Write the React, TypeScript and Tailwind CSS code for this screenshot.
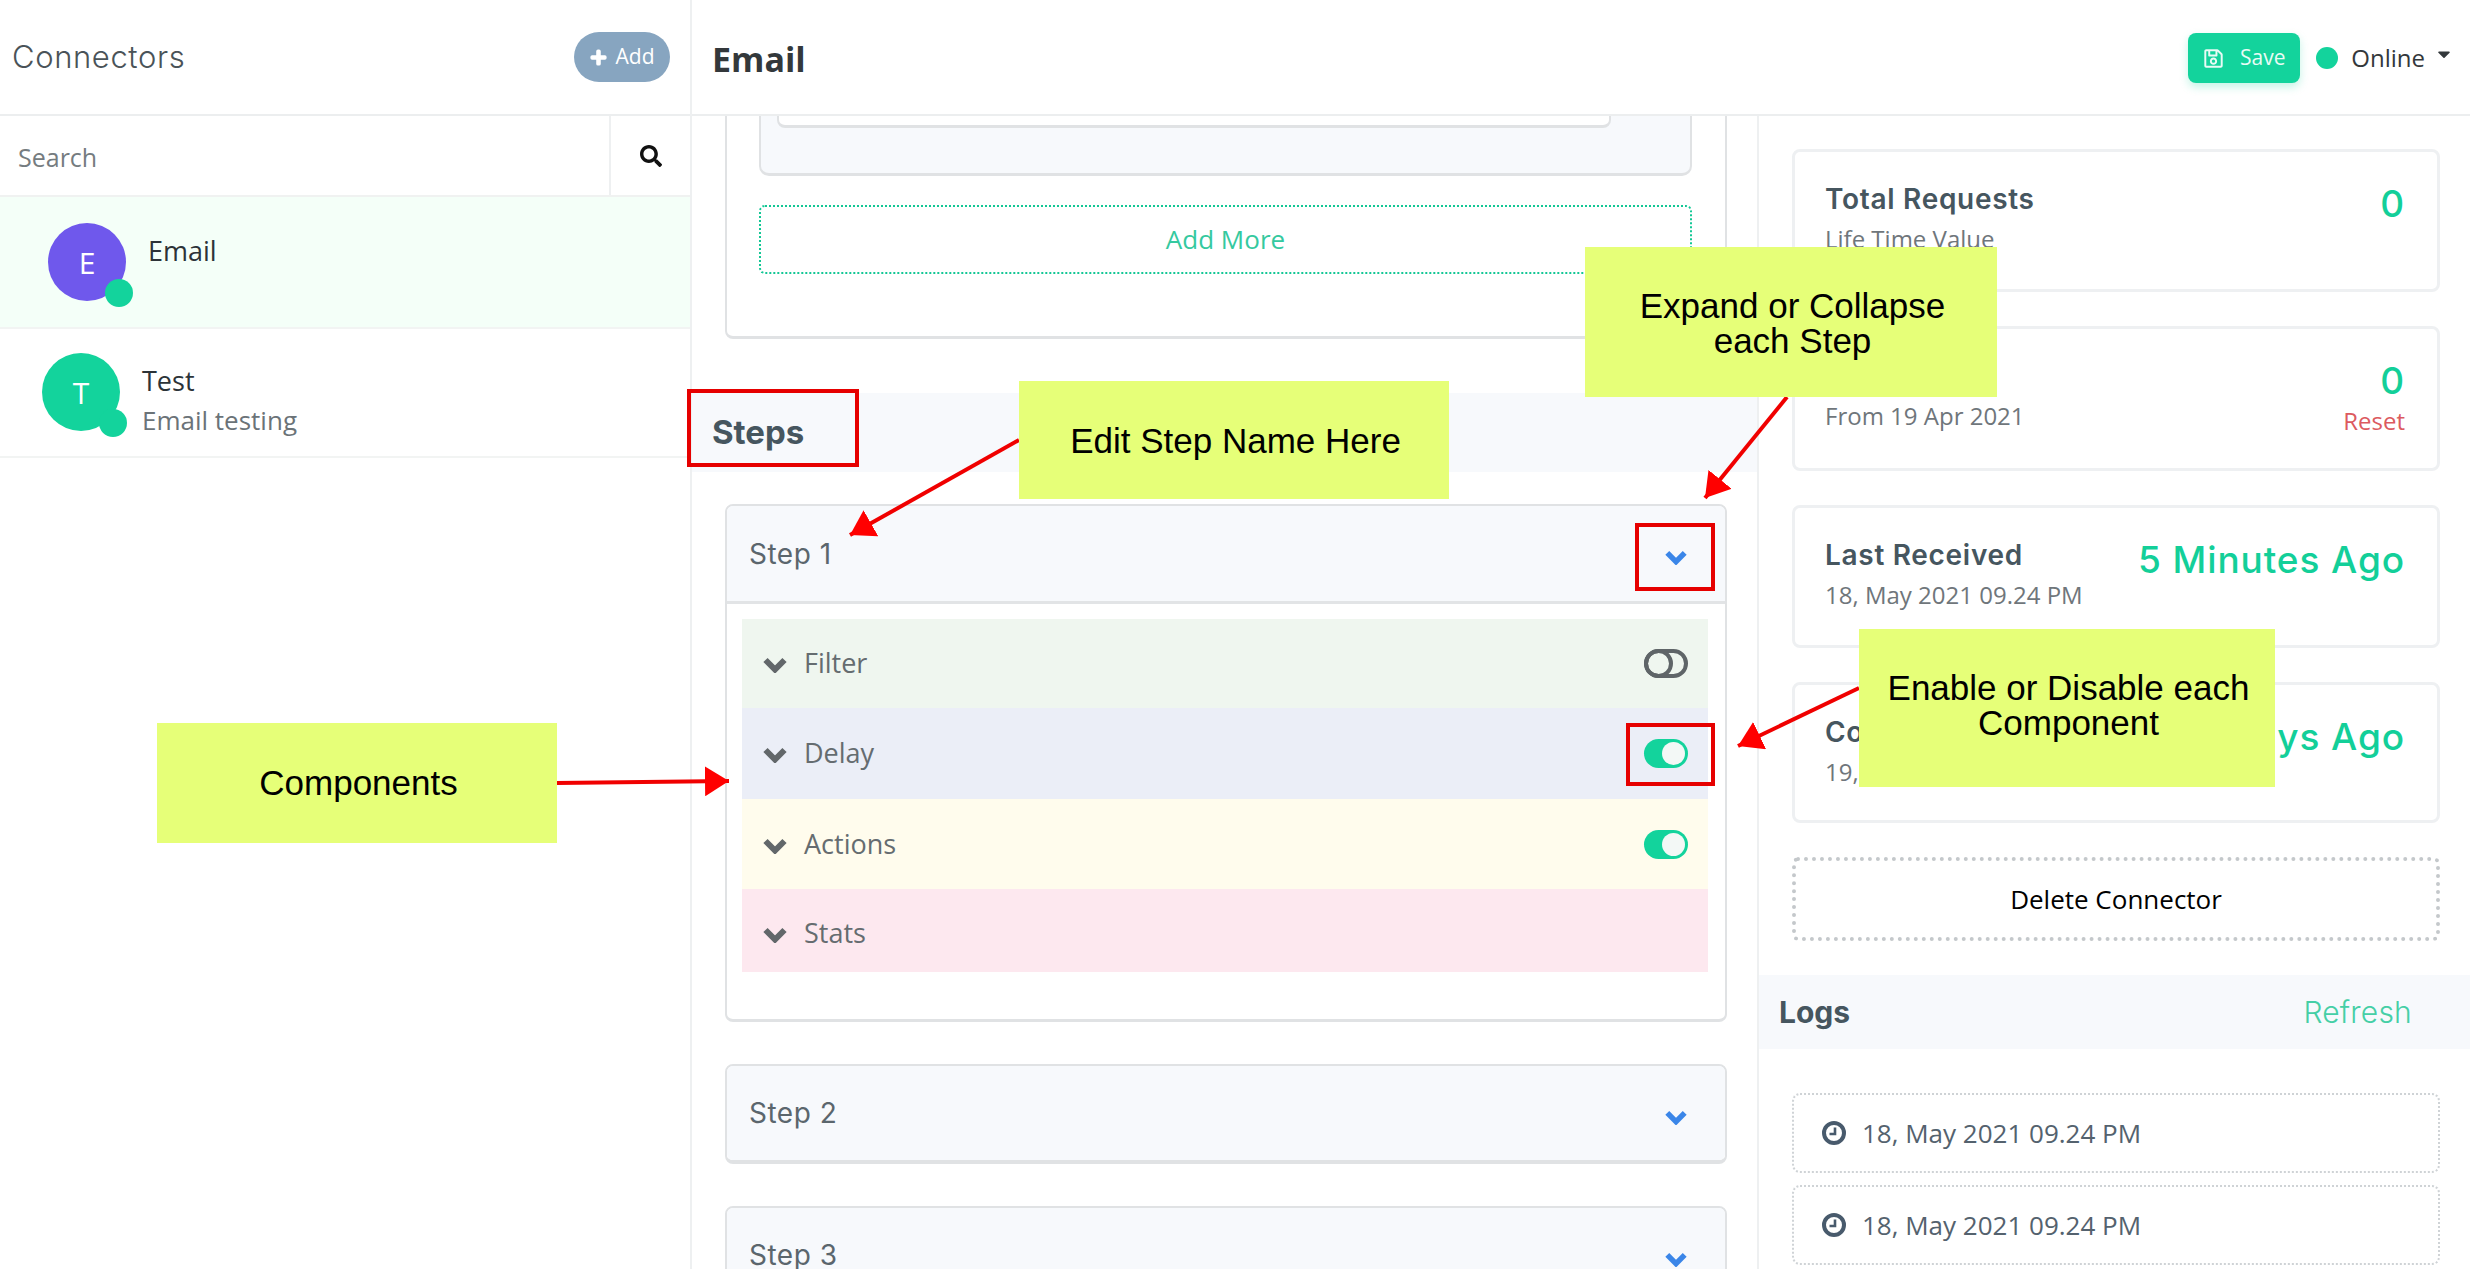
import React from 'react';
import { FaPlus, FaSearch, FaRegSave, FaCaretDown } from 'react-icons/fa';

const Chevron = ({ className }: { className: string }) => (
  <svg className={className} viewBox="0 0 24 16" fill="none" stroke="currentColor" strokeWidth="6">
    <polyline points="2.5,3 12,12.5 21.5,3" />
  </svg>
);

const Clock = () => (
  <svg className="h-[24px] w-[24px] shrink-0 text-[#485a6c]" viewBox="0 0 24 24" fill="none" stroke="currentColor">
    <circle cx="12" cy="12" r="10" strokeWidth="4" />
    <polyline points="13,6.5 13,13 7.5,13" strokeWidth="2.6" />
  </svg>
);

const Toggle = ({ on }: { on: boolean }) =>
  on ? (
    <div className="flex h-[29px] w-[44px] items-center justify-end rounded-full bg-[#13d39c] pr-[3px]">
      <div className="h-[23px] w-[23px] rounded-full bg-[#f3f8f6]" />
    </div>
  ) : (
    <div className="h-[29px] w-[44px] rounded-full border-[4px] border-[#5f6568]">
      <div className="-ml-[4px] -mt-[4px] h-[29px] w-[29px] rounded-full border-[4px] border-[#5f6568]" />
    </div>
  );

const ConnectorRow = ({
  letter,
  name,
  sub,
  active,
}: {
  letter: string;
  name: string;
  sub?: string;
  active?: boolean;
}) => (
  <div
    className={`flex border-b-2 border-[#f2f4f3] ${
      active ? 'h-[132px] bg-[#f4fff8] pl-[48px] pt-[26px]' : 'h-[129px] pl-[42px] pt-[24px]'
    }`}
  >
    <div className="relative h-[78px] w-[78px] shrink-0">
      <div
        className={`flex h-full w-full items-center justify-center rounded-full text-[30px] text-white ${
          active ? 'bg-[#6f58ec]' : 'bg-[#13d39c]'
        }`}
      >
        {letter}
      </div>
      <div className="absolute left-[57px] top-[56px] h-[28px] w-[28px] rounded-full bg-[#13d39c]" />
    </div>
    <div className={`ml-[22px] ${active ? 'pt-[10px]' : 'pt-[10px]'}`}>
      <div className="text-[27px] leading-[36px] text-[#2c3338]">{name}</div>
      {sub && <div className="mt-[3px] text-[26px] leading-[36px] text-[#6b7378]">{sub}</div>}
    </div>
  </div>
);

const StepHeader = ({ name, open }: { name: string; open?: boolean }) => (
  <div
    className={`flex items-center justify-between rounded-t-[6px] bg-[#f7f9fc] pl-[22px] pr-[38px] ${
      open ? 'h-[98px] border-b-[3px] border-[#e2e4e6]' : 'h-full rounded-b-[6px]'
    }`}
  >
    <span className="font-['Inter',sans-serif] text-[28px] tracking-[0.5px] text-[#5b666d]">{name}</span>
    <Chevron className="mt-[8px] h-[15px] w-[22px] text-[#3b86e8]" />
  </div>
);

const ComponentRow = ({
  name,
  bg,
  height,
  toggle,
}: {
  name: string;
  bg: string;
  height: string;
  toggle?: 'on' | 'off';
}) => (
  <div className={`flex items-center justify-between pl-[21px] pr-[20px] ${bg} ${height}`}>
    <div className="flex items-center">
      <Chevron className="mt-[3px] h-[16px] w-[24px] text-[#62676a]" />
      <span className="ml-[17px] text-[27px] text-[#656c70]">{name}</span>
    </div>
    {toggle && <Toggle on={toggle === 'on'} />}
  </div>
);

const StatCard = ({
  title,
  sub,
  value,
  extra,
  height,
}: {
  title: string;
  sub: string;
  value: string;
  extra?: string;
  height: string;
}) => (
  <div className={`flex justify-between rounded-[8px] border-[3px] border-[#eef0f2] pl-[30px] pr-[32px] pt-[27px] ${height}`}>
    <div>
      <div className="h-[40px] font-['Inter',sans-serif] text-[28px] font-semibold leading-[40px] tracking-[0.7px] text-[#46565f]">{title}</div>
      <div className="mt-[3px] text-[24px] leading-[34px] text-[#6f767b]">{sub}</div>
    </div>
    <div className="flex flex-col items-end">
      <div className="mt-[3px] h-[44px] font-['Inter',sans-serif] text-[37px] font-medium leading-[44px] tracking-[0.9px] text-[#13cf99]">{value}</div>
      {extra && <div className="mt-[2px] text-[24px] leading-[32px] text-[#dc5a5f]">{extra}</div>}
    </div>
  </div>
);

const LogItem = () => (
  <div className="flex h-[80px] items-center rounded-[8px] border-2 border-dotted border-[#cfd3d6] pl-[28px]">
    <Clock />
    <span className="ml-[16px] text-[26px] text-[#54626e]">18, May 2021 09.24 PM</span>
  </div>
);

const Callout = ({ className, children }: { className: string; children: React.ReactNode }) => (
  <div
    className={`absolute flex items-center justify-center bg-[#e6ff78] pl-[3px] text-center font-['Liberation_Sans',sans-serif] text-[35px] leading-[35px] text-black ${className}`}
  >
    {children}
  </div>
);

export default function App() {
  return (
    <div className="relative flex h-[1269px] w-[2470px] overflow-hidden bg-white font-['Open_Sans',sans-serif]">
      {/* connectors list */}
      <aside className="w-[692px] shrink-0 border-r-2 border-[#eef0f1]">
        <div className="flex h-[116px] items-center justify-between border-b-2 border-[#eceeef] pl-[12px] pr-[20px]">
          <span className="font-['Inter',sans-serif] text-[31px] font-light tracking-[0.6px] text-[#4a5358]">Connectors</span>
          <button className="flex h-[50px] w-[96px] items-center justify-center gap-[9px] rounded-full bg-[#87a5c0] text-[21px] text-white">
            <FaPlus className="text-[17px]" stroke="currentColor" strokeWidth={40} />
            Add
          </button>
        </div>
        <div className="flex h-[81px] border-b-2 border-[#f0f2f1]">
          <div className="flex flex-1 items-center border-r-2 border-[#eef0f1] pl-[18px] pt-[4px] text-[25px] text-[#757c80]">Search</div>
          <div className="flex w-[79px] items-center justify-center">
            <FaSearch className="text-[22px] text-[#111]" />
          </div>
        </div>
        <ConnectorRow letter="E" name="Email" active />
        <ConnectorRow letter="T" name="Test" sub="Email testing" />
      </aside>

      <div className="flex min-w-0 flex-1 flex-col">
        {/* top bar */}
        <header className="flex h-[116px] shrink-0 items-center justify-between border-b-2 border-[#eceeef] pl-[20px] pr-[16px]">
          <h1 className="pt-[4px] text-[34px] font-bold text-[#33383b]">Email</h1>
          <div className="flex items-center pt-[2px]">
            <button className="flex h-[50px] w-[112px] items-center justify-center gap-[16px] rounded-[8px] bg-[#13d39c] text-[21px] text-[#e8fbf5] shadow-[0_4px_8px_rgba(19,211,156,0.25)]">
              <FaRegSave className="text-[21px]" />
              Save
            </button>
            <div className="ml-[16px] h-[22px] w-[22px] rounded-full bg-[#13d39c]" />
            <span className="ml-[13px] text-[24px] text-[#33383b]">Online</span>
            <FaCaretDown className="mb-[8px] ml-[9px] text-[20px] text-[#33383b]" />
          </div>
        </header>

        <div className="flex min-h-0 flex-1">
          {/* steps column */}
          <main className="w-[1067px] shrink-0 overflow-hidden border-r-2 border-[#eef0f1]">
            <div className="ml-[33px] mr-[30px] h-[223px] rounded-b-[8px] border-x-2 border-b-[3px] border-[#e0e2e4] pl-[32px] pr-[33px]">
              <div className="h-[60px] rounded-b-[10px] border-x-2 border-b-[3px] border-[#e0e2e4] bg-[#f7f9fc]">
                <div className="ml-[16px] mr-[79px] h-[12px] rounded-b-[8px] border-x-2 border-b-[3px] border-[#e0e2e4] bg-white" />
              </div>
              <div className="mt-[29px] flex h-[69px] items-center justify-center rounded-[6px] border-2 border-dotted border-[#13c795] text-[26px] text-[#35c99f]">
                Add More
              </div>
            </div>
            <div className="mt-[54px] flex h-[79px] items-center bg-[#f7f9fc] pl-[20px]">
              <h2 className="font-['Inter',sans-serif] text-[33px] font-bold text-[#46565f]">Steps</h2>
            </div>
            <div className="ml-[33px] mr-[30px] mt-[32px] flex flex-col gap-[42px]">
              <div className="h-[518px] rounded-[8px] border-x-2 border-b-[3px] border-t-2 border-[#e0e2e4]">
                <StepHeader name="Step 1" open />
                <div className="ml-[15px] mr-[17px] mt-[15px]">
                  <ComponentRow name="Filter" bg="bg-[#eff6ef]" height="h-[89px]" toggle="off" />
                  <ComponentRow name="Delay" bg="bg-[#ebeef7]" height="h-[91px]" toggle="on" />
                  <ComponentRow name="Actions" bg="bg-[#fffced]" height="h-[90px]" toggle="on" />
                  <ComponentRow name="Stats" bg="bg-[#fde8ef] pt-[5px]" height="h-[83px]" />
                </div>
              </div>
              <div className="h-[100px] rounded-[8px] border-x-2 border-b-[4px] border-t-2 border-[#e0e2e4]">
                <StepHeader name="Step 2" />
              </div>
              <div className="h-[100px] rounded-[8px] border-x-2 border-b-[4px] border-t-2 border-[#e0e2e4]">
                <StepHeader name="Step 3" />
              </div>
            </div>
          </main>

          {/* stats and logs */}
          <section className="min-w-0 flex-1">
            <div className="ml-[33px] mr-[30px] mt-[33px] flex flex-col gap-[34px]">
              <StatCard title="Total Requests" sub="Life Time Value" value="0" height="h-[143px]" />
              <StatCard title="" sub="From 19 Apr 2021" value="0" extra="Reset" height="h-[145px]" />
              <StatCard title="Last Received" sub="18, May 2021 09.24 PM" value="5 Minutes Ago" height="h-[143px]" />
              <StatCard title="Connector Created" sub="19, Apr 2021 09.24 PM" value="29 Days Ago" height="h-[141px]" />
              <div className="flex h-[84px] items-center justify-center rounded-[6px] border-[4px] border-dotted border-[#c4c8cb] text-[26px] text-black">
                Delete Connector
              </div>
            </div>
            <div className="mt-[34px] flex h-[74px] items-center justify-between bg-[#f7f9fc] pl-[20px] pr-[58px]">
              <h3 className="font-['Inter',sans-serif] text-[30px] font-bold text-[#46565f]">Logs</h3>
              <span className="font-['Inter',sans-serif] text-[30px] font-light tracking-[0.2px] text-[#45cfa6]">Refresh</span>
            </div>
            <div className="ml-[33px] mr-[30px] mt-[44px] flex flex-col gap-[12px]">
              <LogItem />
              <LogItem />
            </div>
          </section>
        </div>
      </div>

      {/* annotations laid over the screenshot */}
      <div className="pointer-events-none absolute inset-0">
        <svg className="absolute inset-0" width="2470" height="1269">
          <defs>
            <marker id="head" markerUnits="userSpaceOnUse" markerWidth="26" markerHeight="30" refX="24" refY="15" orient="auto">
              <polygon points="0,0 24,15 0,30" fill="#ff0000" />
            </marker>
          </defs>
          <g stroke="#f00000" strokeWidth="4" markerEnd="url(#head)">
            <line x1="557" y1="783" x2="729" y2="781" />
            <line x1="1019" y1="440" x2="850" y2="535" />
            <line x1="1787" y1="397" x2="1705" y2="498" />
            <line x1="1859" y1="688" x2="1738" y2="746" />
          </g>
        </svg>
        <div className="absolute left-[687px] top-[389px] h-[78px] w-[172px] border-[4px] border-[#e60000]" />
        <div className="absolute left-[1635px] top-[523px] h-[68px] w-[80px] border-[4px] border-[#e60000]" />
        <div className="absolute left-[1626px] top-[723px] h-[63px] w-[89px] border-[4px] border-[#e60000]" />
        <Callout className="left-[157px] top-[723px] h-[120px] w-[400px] pb-[2px]">Components</Callout>
        <Callout className="left-[1019px] top-[381px] h-[118px] w-[430px]">Edit Step Name Here</Callout>
        <Callout className="left-[1585px] top-[247px] h-[150px] w-[412px] pt-[2px]">
          Expand or Collapse
          <br />
          each Step
        </Callout>
        <Callout className="left-[1859px] top-[629px] h-[158px] w-[416px] pb-[6px]">
          Enable or Disable each
          <br />
          Component
        </Callout>
      </div>
    </div>
  );
}
